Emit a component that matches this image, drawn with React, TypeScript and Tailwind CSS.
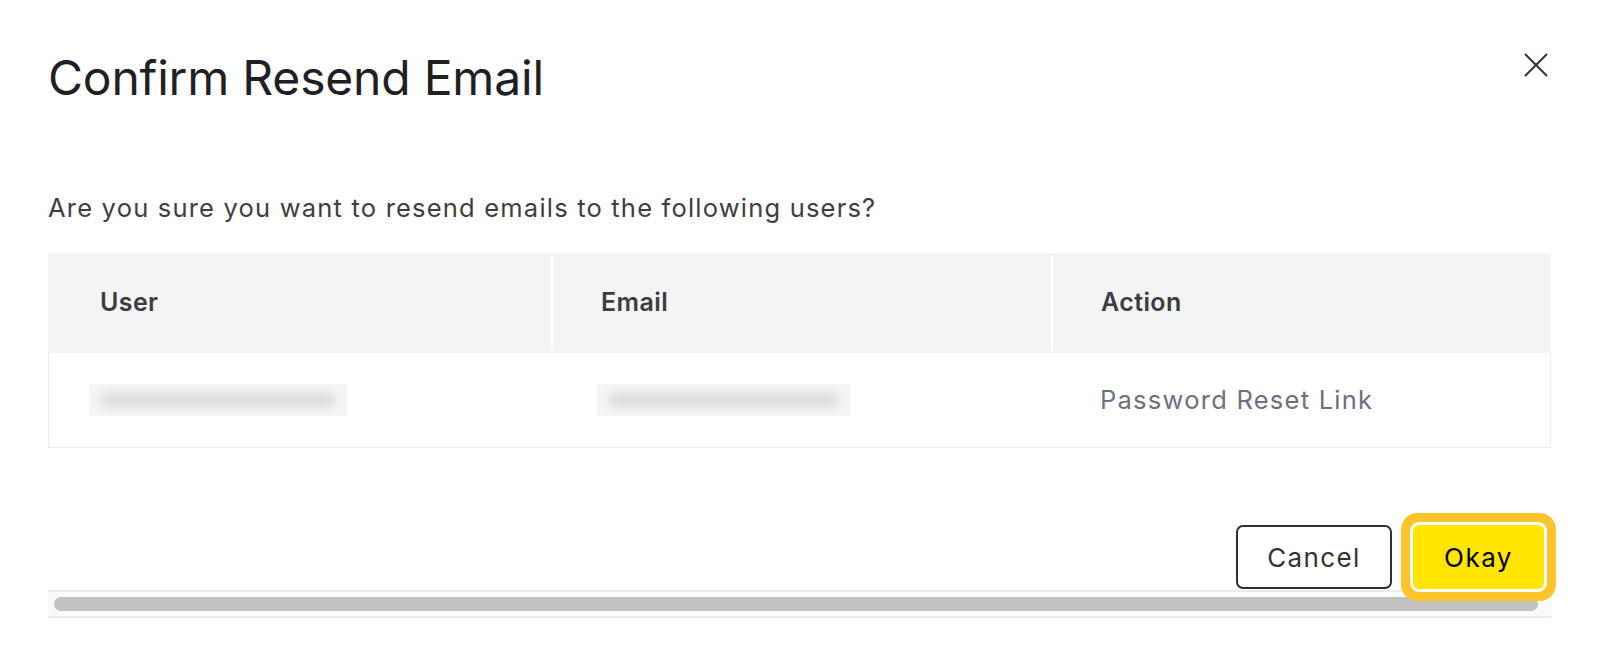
import React from "react";

function Blur({ w }: { w: number }) {
  return (
    <div className="relative h-[32px] overflow-hidden bg-[#f5f5f6]" style={{ width: w }}>
      <div className="absolute left-[12px] right-[12px] top-[9px] h-[14px] rounded bg-[#d9dadd] blur-[5px]" />
    </div>
  );
}

export default function App() {
  return (
    <div
      className="w-[1600px] h-[666px] bg-white pl-[48px] pr-[49px] pt-[49px] overflow-hidden"
      style={{ fontFamily: "Inter, 'Noto Sans', sans-serif" }}
    >
      <div className="flex items-start justify-between">
        <h1 className="text-[48px] leading-[58px] font-normal text-[#1f2024] tracking-[-0.2px]">
          Confirm Resend Email
        </h1>
        <button className="mt-[4px] mr-[3px] w-[24px] h-[24px] text-[#333]" aria-label="Close">
          <svg width="24" height="24" viewBox="0 0 24 24" fill="none" stroke="currentColor" strokeWidth="2">
            <line x1="1" y1="1" x2="23" y2="23" />
            <line x1="23" y1="1" x2="1" y2="23" />
          </svg>
        </button>
      </div>

      <p className="mt-[86px] text-[25.5px] leading-[30px] tracking-[1.2px] text-[#3d3e43]">
        Are you sure you want to resend emails to the following users?
      </p>

      <div className="mt-[30px]">
        <div className="grid grid-cols-[503px_500px_500px] bg-[#f3f4f6] py-[2px]">
          <div className="h-[96px] flex items-center pl-[52px] text-[25px] font-semibold tracking-[0.4px] text-[#3b3c42]">User</div>
          <div className="h-[96px] flex items-center pl-[48px] border-l-2 border-white text-[25px] font-semibold tracking-[0.4px] text-[#3b3c42]">Email</div>
          <div className="h-[96px] flex items-center pl-[48px] border-l-2 border-white text-[25px] font-semibold tracking-[0.4px] text-[#3b3c42]">Action</div>
        </div>
        <div className="grid grid-cols-[503px_500px_500px] h-[95px] border-x border-b border-[#ececee]">
          <div className="flex items-center pl-[40px]">
            <Blur w={258} />
          </div>
          <div className="flex items-center pl-[45px]">
            <Blur w={253} />
          </div>
          <div className="flex items-center pl-[48px] text-[25.5px] tracking-[1.25px] text-[#6b7080]">Password Reset Link</div>
        </div>
      </div>

      <div className="mt-[77px] flex justify-end gap-[21px] pr-[7px]">
        <button className="w-[156px] h-[64px] rounded-[7px] border-2 border-[#2f2f2f] bg-white text-[26px] tracking-[1.4px] text-[#333]">
          Cancel
        </button>
        <button className="relative z-10 w-[131px] h-[64px] rounded-[6px] bg-[#ffe500] text-[26px] tracking-[1.5px] text-black ring-[9px] ring-[#fcc42a] ring-offset-[3px] ring-offset-white">
          Okay
        </button>
      </div>

      <div className="mt-[1px] h-[28px] border-y-2 border-[#ebebeb] bg-[#fafafa] flex items-center pl-[6px] pr-[13px]">
        <div className="h-[14px] w-full rounded-full bg-[#c1c1c1]" />
      </div>
    </div>
  );
}
